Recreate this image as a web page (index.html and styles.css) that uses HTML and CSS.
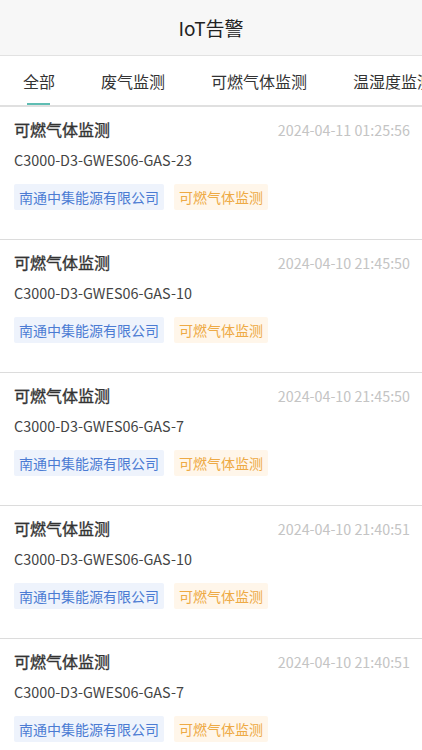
FILE: index.html
```html
<!DOCTYPE html>
<html lang="zh-CN">
<head>
    <meta charset="UTF-8">
    <meta name="viewport" content="width=device-width, initial-scale=1.0">
    <title>IoT告警</title>
    <link rel="stylesheet" href="styles.css">
</head>
<body>
    <div class="header">IoT告警</div>

    <div class="tabs">
        <div class="tab active">全部</div>
        <div class="tab">废气监测</div>
        <div class="tab">可燃气体监测</div>
        <div class="tab">温湿度监测</div>
    </div>

    <div class="list">
        <div class="item">
            <div class="item-top">
                <span class="item-title">可燃气体监测</span>
                <span class="item-time">2024-04-11 01:25:56</span>
            </div>
            <div class="item-code">C3000-D3-GWES06-GAS-23</div>
            <div class="tags">
                <span class="tag tag-blue">南通中集能源有限公司</span>
                <span class="tag tag-orange">可燃气体监测</span>
            </div>
        </div>
        <div class="item">
            <div class="item-top">
                <span class="item-title">可燃气体监测</span>
                <span class="item-time">2024-04-10 21:45:50</span>
            </div>
            <div class="item-code">C3000-D3-GWES06-GAS-10</div>
            <div class="tags">
                <span class="tag tag-blue">南通中集能源有限公司</span>
                <span class="tag tag-orange">可燃气体监测</span>
            </div>
        </div>
        <div class="item">
            <div class="item-top">
                <span class="item-title">可燃气体监测</span>
                <span class="item-time">2024-04-10 21:45:50</span>
            </div>
            <div class="item-code">C3000-D3-GWES06-GAS-7</div>
            <div class="tags">
                <span class="tag tag-blue">南通中集能源有限公司</span>
                <span class="tag tag-orange">可燃气体监测</span>
            </div>
        </div>
        <div class="item">
            <div class="item-top">
                <span class="item-title">可燃气体监测</span>
                <span class="item-time">2024-04-10 21:40:51</span>
            </div>
            <div class="item-code">C3000-D3-GWES06-GAS-10</div>
            <div class="tags">
                <span class="tag tag-blue">南通中集能源有限公司</span>
                <span class="tag tag-orange">可燃气体监测</span>
            </div>
        </div>
        <div class="item">
            <div class="item-top">
                <span class="item-title">可燃气体监测</span>
                <span class="item-time">2024-04-10 21:40:51</span>
            </div>
            <div class="item-code">C3000-D3-GWES06-GAS-7</div>
            <div class="tags">
                <span class="tag tag-blue">南通中集能源有限公司</span>
                <span class="tag tag-orange">可燃气体监测</span>
            </div>
        </div>
    </div>
</body>
</html>
```

FILE: styles.css
```css
body {
    font-family: "Noto Sans CJK SC", "Noto Sans", sans-serif;
    background-color: #fff;
    color: #333;
    margin: 0;
    padding: 0;
    overflow: hidden;
}

/* Top bar */
.header {
    height: 55px;
    line-height: 55px;
    text-align: center;
    font-size: 19px;
    color: #222;
    background-color: #f7f7f7;
    border-bottom: 1px solid #e2e2e2;
}

/* Category tabs - the last one runs past the screen edge */
.tabs {
    display: flex;
    height: 49px;
    white-space: nowrap;
    overflow: hidden;
    border-bottom: 2px solid #e0e0e0;
}

.tab {
    flex-shrink: 0;
    padding: 0 23px;
    font-size: 16px;
    line-height: 51px;
    color: #333;
    position: relative;
}

.tab.active::after {
    content: "";
    position: absolute;
    left: 27px;
    bottom: -1px;
    width: 23px;
    height: 3px;
    background-color: #5fbdb3;
}

/* Alarm list */
.item {
    padding: 10px 12px 29px 14px;
    border-bottom: 1px solid #dcdcdc;
}

.item-top {
    display: flex;
    justify-content: space-between;
    align-items: center;
    height: 24px;
}

.item-title {
    font-size: 16px;
    font-weight: normal;
    -webkit-text-stroke: 0.35px #333;
    color: #333;
}

.item-time {
    font-size: 14.3px;
    color: #c4c4c4;
}

.item-code {
    margin-top: 9px;
    font-size: 14.4px;
    line-height: 20px;
    color: #444;
}

.tags {
    display: flex;
    gap: 10px;
    margin-top: 14px;
}

.tag {
    font-size: 14px;
    line-height: 26px;
    padding: 0 5px;
    border-radius: 2px;
}

.tag-blue {
    color: #4b7bd3;
    background-color: #eef3fc;
}

.tag-orange {
    color: #eeaa45;
    background-color: #fff6ea;
}
```
